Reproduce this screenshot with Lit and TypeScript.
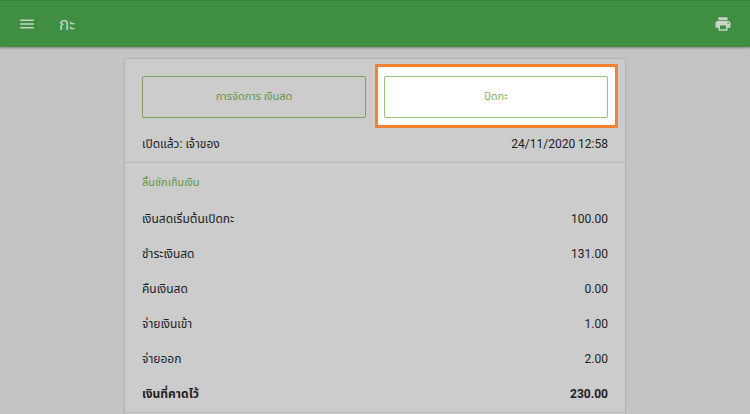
import { LitElement, html, css } from "lit";
import { customElement } from "lit/decorators.js";

const rows: [string, string][] = [
  ["เงินสดเริ่มต้นเปิดกะ", "100.00"],
  ["ชำระเงินสด", "131.00"],
  ["คืนเงินสด", "0.00"],
  ["จ่ายเงินเข้า", "1.00"],
  ["จ่ายออก", "2.00"],
];

@customElement("app-root")
export class AppRoot extends LitElement {
  static styles = css`
    :host {
      display: flex;
      flex-direction: column;
      min-height: 100vh;
      background: #c4c4c4;
      color: #222222;
      font: 12px/16px Roboto, "Noto Sans Thai", "Noto Sans", sans-serif;
    }
    * {
      box-sizing: border-box;
    }
    .bar {
      display: flex;
      align-items: center;
      height: 47px;
      padding: 0 18px;
      border-top: 1px solid #3a833c;
      background: #3f8e41;
      color: #c8d4c8;
      box-shadow: 0 1px 2px rgba(0, 0, 0, 0.35);
    }
    .bar button {
      display: block;
      padding: 0;
      border: 0;
      background: none;
      color: inherit;
    }
    svg {
      display: block;
      fill: currentColor;
    }
    h1 {
      flex: 1;
      margin: 0 0 0 23px;
      font-size: 17px;
      line-height: 24px;
      font-weight: 400;
    }
    .card {
      flex: 1;
      margin: 12px 125px 0;
      background: #cccccc;
      border-radius: 2px 2px 0 0;
      box-shadow: 0 0 2px rgba(0, 0, 0, 0.3);
    }
    .actions {
      display: grid;
      grid-template-columns: 1fr 1fr;
      gap: 18px;
      padding: 17px 17px 0;
    }
    .action {
      height: 42px;
      padding: 0;
      border: 1px solid #7fa35c;
      border-radius: 2px;
      background: none;
      color: #659440;
      font: inherit;
      font-size: 11px;
    }
    .focus {
      position: relative;
      display: grid;
    }
    .focus::before {
      content: "";
      position: absolute;
      inset: -12px -10px -10px -9px;
      border: 3px solid #f58233;
      background: #ffffff;
    }
    .spot {
      position: relative;
      border-color: #98c478;
      color: #7cb350;
    }
    .line {
      display: flex;
      justify-content: space-between;
      padding: 18px 17px 10px;
      border-bottom: 1px solid #bababa;
    }
    h2 {
      margin: 0;
      padding: 12px 17px 10px;
      font-size: 11px;
      line-height: 16px;
      font-weight: 400;
      color: #659440;
    }
    table {
      width: 100%;
      border-spacing: 0;
      padding-bottom: 1px;
      border-bottom: 1px solid #bababa;
    }
    th,
    td {
      height: 35px;
      padding: 0 17px;
      text-align: left;
      font-weight: 400;
    }
    td {
      text-align: right;
    }
    .total th,
    .total td {
      font-weight: 700;
    }
  `;

  render() {
    return html`
      <header class="bar">
        <button aria-label="เมนู">
          <svg width="18" height="18" viewBox="0 0 24 24"><path d="M3 18h18v-2H3v2zm0-5h18v-2H3v2zm0-7v2h18V6H3z" /></svg>
        </button>
        <h1>กะ</h1>
        <button aria-label="พิมพ์">
          <svg width="18" height="18" viewBox="0 0 24 24"><path d="M19 8H5c-1.660 0-3 1.340-3 3v6h4v4h12v-4h4v-6c0-1.660-1.340-3-3-3zm-3 11H8v-5h8v5zm3-7c-.55 0-1-.45-1-1s.45-1 1-1 1 .45 1 1-.45 1-1 1zm-1-9H6v4h12V3z" /></svg>
        </button>
      </header>
      <main class="card">
        <div class="actions">
          <button class="action">การจัดการ เงินสด</button>
          <div class="focus"><button class="action spot">ปิดกะ</button></div>
        </div>
        <div class="line"><span>เปิดแล้ว: เจ้าของ</span><span>24/11/2020 12:58</span></div>
        <h2 id="drawer">ลิ้นชักเก็บเงิน</h2>
        <table aria-labelledby="drawer">
          <tbody>
            ${rows.map(([label, amount]) => html`<tr><th scope="row">${label}</th><td>${amount}</td></tr>`)}
            <tr class="total"><th scope="row">เงินที่คาดไว้</th><td>230.00</td></tr>
          </tbody>
        </table>
      </main>
    `;
  }
}
